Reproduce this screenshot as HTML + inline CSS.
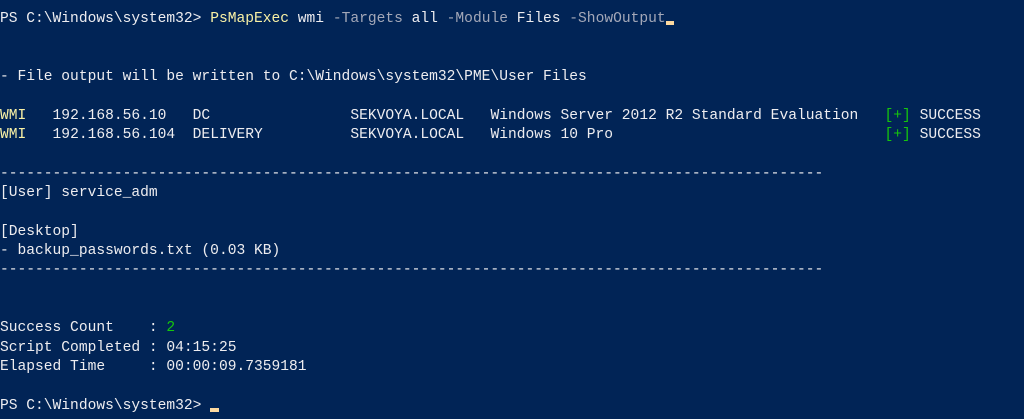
<!DOCTYPE html>
<html><head><style>
html,body{margin:0;padding:0;background:#012456;width:1024px;height:419px;overflow:hidden}
pre{margin:0;position:absolute;left:0;top:10px;font-family:"Liberation Mono",monospace;font-size:14.6px;line-height:19.33px;color:#eeedf0;white-space:pre}
.y{color:#f9f1a5}.g{color:#a4a8b8}.gr{color:#16c60c}
.c{display:inline-block;width:8.76px;height:4px;background:#fcd9a0;vertical-align:-3px}
</style></head><body><pre>PS C:\Windows\system32&gt; <span class="y">PsMapExec</span> wmi <span class="g">-Targets</span> all <span class="g">-Module</span> Files <span class="g">-ShowOutput</span><span class="c"></span>


- File output will be written to C:\Windows\system32\PME\User Files

<span class="y">WMI</span>   192.168.56.10   DC                SEKVOYA.LOCAL   Windows Server 2012 R2 Standard Evaluation   <span class="gr">[+]</span> SUCCESS
<span class="y">WMI</span>   192.168.56.104  DELIVERY          SEKVOYA.LOCAL   Windows 10 Pro                               <span class="gr">[+]</span> SUCCESS

----------------------------------------------------------------------------------------------
[User] service_adm

[Desktop]
- backup_passwords.txt (0.03 KB)
----------------------------------------------------------------------------------------------


Success Count    : <span class="gr">2</span>
Script Completed : 04:15:25
Elapsed Time     : 00:00:09.7359181

PS C:\Windows\system32&gt; <span class="c"></span></pre></body></html>
